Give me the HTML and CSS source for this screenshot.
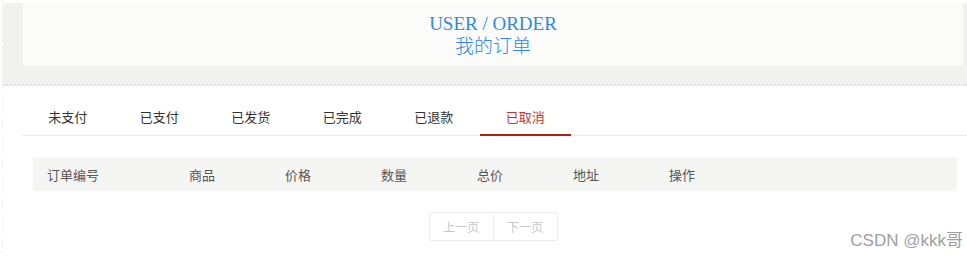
FILE: index.html
```html
<!DOCTYPE html>
<html lang="zh-CN">
<head>
    <meta charset="UTF-8">
    <title>我的订单</title>
    <link rel="stylesheet" href="styles.css">
</head>
<body>
    <div class="page">
        <div class="banner">
            <div class="banner-card">
                <div class="banner-en">USER / ORDER</div>
                <div class="banner-cn">我的订单</div>
            </div>
        </div>

        <div class="content">
            <ul class="tabs">
                <li>未支付</li>
                <li>已支付</li>
                <li>已发货</li>
                <li>已完成</li>
                <li>已退款</li>
                <li class="active">已取消</li>
            </ul>

            <div class="table-head">
                <span class="col-first">订单编号</span>
                <span>商品</span>
                <span>价格</span>
                <span>数量</span>
                <span>总价</span>
                <span>地址</span>
                <span>操作</span>
            </div>

            <div class="pager">
                <button class="pager-btn">上一页</button>
                <button class="pager-btn">下一页</button>
            </div>
        </div>
    </div>
    <div class="watermark">CSDN @kkk哥</div>
</body>
</html>
```

FILE: styles.css
```css
body {
    margin: 0;
    font-family: "Liberation Sans", "Noto Sans CJK SC", sans-serif;
    background: #fff;
    color: #333;
}
.page {
    padding-top: 3px;
    height: 253px;
    box-sizing: border-box;
    border-left: 1px dashed #f0f0f0;
    margin-left: 2px;
}
.banner {
    background: #f1f1ef;
    padding: 0 4px 18px 20px;
    border-bottom: 2px dotted #e4e4e4;
}
.banner-card {
    background: #fbfbf9;
    border-radius: 0 0 4px 4px;
    height: 63px;
    text-align: center;
    font-family: "Liberation Serif", "Noto Sans CJK SC", serif;
    color: #2d8ae2;
    font-size: 19px;
    line-height: 23px;
    padding-top: 9px;
    box-sizing: border-box;
}
.banner-cn {
    font-weight: 300;
}
.content {
    padding: 0 0 0 19px;
}
.tabs {
    list-style: none;
    margin: 15px 0 0;
    padding: 0;
    display: flex;
    border-bottom: 1px solid #ececec;
}
.tabs li {
    width: 91.5px;
    text-align: center;
    font-size: 13px;
    line-height: 33px;
    height: 33px;
    border-bottom: 2px solid transparent;
    margin-bottom: -1px;
}
.tabs li.active {
    color: #c0392b;
    border-bottom-color: #b51c10;
}
.table-head {
    margin: 21px 10px 0 11px;
    background: #f5f5f3;
    height: 34px;
    display: flex;
    align-items: center;
    font-size: 13px;
    color: #555;
    padding-left: 14px;
}
.table-head span {
    width: 96px;
}
.table-head .col-first {
    width: 142px;
}
.pager {
    display: flex;
    justify-content: center;
    margin: 21px 0 0 -3px;
}
.pager-btn {
    width: 65px;
    height: 29px;
    background: #fff;
    border: 1px solid #ececec;
    font-family: "Liberation Sans", "Noto Sans CJK SC", sans-serif;
    font-size: 12px;
    color: #c8c8c8;
    padding: 0;
}
.pager-btn:first-child {
    border-radius: 2px 0 0 2px;
}
.pager-btn + .pager-btn {
    border-left: none;
    width: 64px;
    border-radius: 0 2px 2px 0;
}
.watermark {
    position: absolute;
    right: 4px;
    top: 226px;
    font-size: 17px;
    color: #a0a0a0;
}
```
